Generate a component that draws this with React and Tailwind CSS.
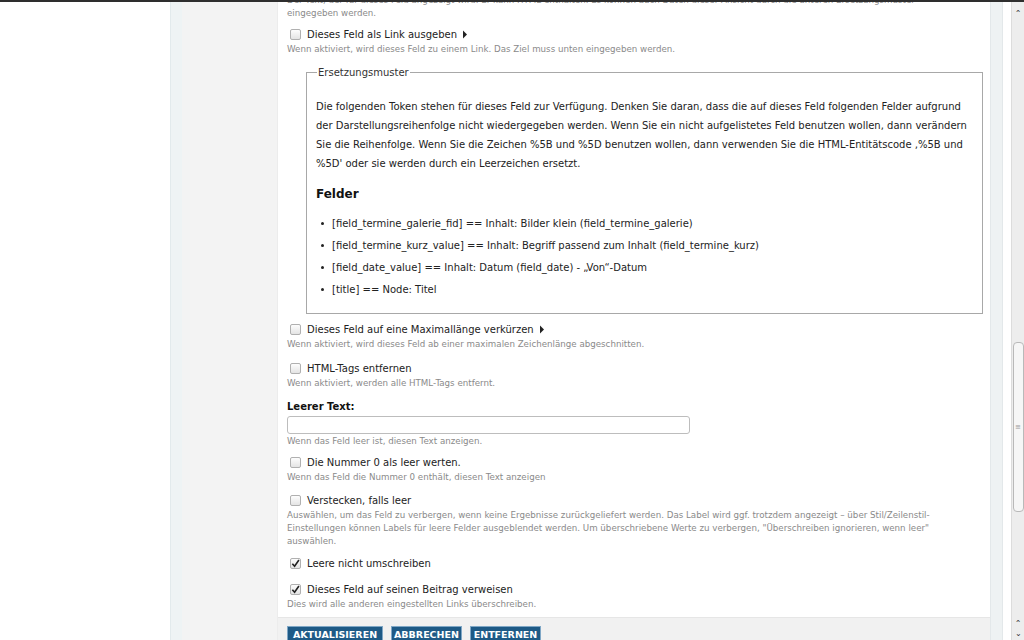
import React from "react";

const font = { fontFamily: '"DejaVu Sans", Verdana, sans-serif' };

function Box({ checked }) {
  return (
    <span className="inline-flex items-center justify-center w-[11px] h-[11px] rounded-[2px] border border-[#b0b0b0] bg-gradient-to-b from-[#fdfdfd] to-[#e4e4e4] shrink-0">
      {checked && (
        <svg width="9" height="9" viewBox="0 0 10 10">
          <path d="M1.5 5.2 L4 8 L8.8 1.2" fill="none" stroke="#222" strokeWidth="1.8" />
        </svg>
      )}
    </span>
  );
}

function Arrow() {
  return (
    <svg width="6" height="9" viewBox="0 0 6 9" className="ml-[5px]">
      <path d="M1 0.5 L5 4.5 L1 8.5 Z" fill="#222" />
    </svg>
  );
}

function Check({ label, desc, checked, arrow, mt = "mt-0" }) {
  return (
    <div className={mt}>
      <div className="flex items-center h-[14px] pl-[3px]">
        <Box checked={checked} />
        <span className="ml-[6px] text-[10px] text-[#222]">{label}</span>
        {arrow && <Arrow />}
      </div>
      {desc && (
        <div className="mt-[2px] max-w-[664px] text-[8.7px] leading-[13px] text-[#8a8a8a]">{desc}</div>
      )}
    </div>
  );
}

export default function App() {
  const tokens = [
    "[field_termine_galerie_fid] == Inhalt: Bilder klein (field_termine_galerie)",
    "[field_termine_kurz_value] == Inhalt: Begriff passend zum Inhalt (field_termine_kurz)",
    "[field_date_value] == Inhalt: Datum (field_date) - „Von“-Datum",
    "[title] == Node: Titel",
  ];

  const buttons = [
    { t: "AKTUALISIEREN", w: "w-[96px]" },
    { t: "ABBRECHEN", w: "w-[71px]" },
    { t: "ENTFERNEN", w: "w-[71px]" },
  ];

  return (
    <div className="w-[1024px] h-[640px] overflow-hidden flex flex-col bg-white" style={font}>
      <div className="h-[2px] bg-[#2e2e2e] shrink-0" />
      <div className="flex flex-1 min-h-0">
        <div className="w-[170px] bg-white" />
        <div className="w-[12px] bg-[#eef3f4] border-l border-[#e2eaec]" />
        <div className="w-[96px] bg-[#f3f3f3] border-r border-[#ececec]" />

        {/* CONTENT */}
        <div className="w-[712px] flex flex-col overflow-hidden">
          <div className="flex-1 pl-[9px] pr-[7px] overflow-hidden">
            <div className="-mt-[8px] text-[8.7px] leading-[13px] text-[#8a8a8a] whitespace-nowrap">
              Der Text, der für dieses Feld angezeigt wird. Er kann HTML enthalten. Es können auch Daten dieser Ansicht durch die unteren Ersetzungsmuster
              <br />
              eingegeben werden.
            </div>

            <Check
              mt="mt-[7px]"
              label="Dieses Feld als Link ausgeben"
              arrow
              desc="Wenn aktiviert, wird dieses Feld zu einem Link. Das Ziel muss unten eingegeben werden."
            />

            {/* FIELDSET */}
            <fieldset className="mt-[9px] ml-[19px] border border-[#a8a8a8] pl-[9px] pr-[4px] pb-[15px]">
              <legend className="text-[10px] text-[#333] px-[1px] ml-[1px]">Ersetzungsmuster</legend>
              <p className="mt-[17px] text-[10px] leading-[19px] text-[#222]">
                Die folgenden Token stehen für dieses Feld zur Verfügung. Denken Sie daran, dass die auf dieses Feld folgenden Felder aufgrund der Darstellungsreihenfolge nicht wiedergegeben werden. Wenn Sie ein nicht aufgelistetes Feld benutzen wollen, dann verändern Sie die Reihenfolge. Wenn Sie die Zeichen %5B und %5D benutzen wollen, dann verwenden Sie die HTML-Entitätscode ‚%5B und %5D' oder sie werden durch ein Leerzeichen ersetzt.
              </p>
              <h3 className="mt-[12px] text-[12px] font-bold text-[#111]">Felder</h3>
              <ul className="mt-[12px] pl-[5px] flex flex-col gap-[5px]">
                {tokens.map((t) => (
                  <li key={t} className="flex items-center text-[10px] leading-[17px] text-[#222]">
                    <span className="w-[3px] h-[3px] rounded-full bg-[#222] mr-[8px]" />
                    {t}
                  </li>
                ))}
              </ul>
            </fieldset>

            <Check
              mt="mt-[8px]"
              label="Dieses Feld auf eine Maximallänge verkürzen"
              arrow
              desc="Wenn aktiviert, wird dieses Feld ab einer maximalen Zeichenlänge abgeschnitten."
            />
            <Check
              mt="mt-[10px]"
              label="HTML-Tags entfernen"
              desc="Wenn aktiviert, werden alle HTML-Tags entfernt."
            />

            <div className="mt-[9px] text-[10px] font-bold text-[#111]">Leerer Text:</div>
            <div className="mt-[2px] w-[403px] h-[18px] rounded-[3px] border border-[#bdbdbd] bg-white" />
            <div className="mt-[1px] text-[8.7px] leading-[13px] text-[#8a8a8a]">Wenn das Feld leer ist, diesen Text anzeigen.</div>

            <Check
              mt="mt-[7px]"
              label="Die Nummer 0 als leer werten."
              desc="Wenn das Feld die Nummer 0 enthält, diesen Text anzeigen"
            />
            <Check
              mt="mt-[9px]"
              label="Verstecken, falls leer"
              desc={'Auswählen, um das Feld zu verbergen, wenn keine Ergebnisse zurückgeliefert werden. Das Label wird ggf. trotzdem angezeigt – über Stil/Zeilenstil-Einstellungen können Labels für leere Felder ausgeblendet werden. Um überschriebene Werte zu verbergen, "Überschreiben ignorieren, wenn leer" auswählen.'}
            />
            <Check mt="mt-[8px]" label="Leere nicht umschreiben" checked />
            <Check
              mt="mt-[12px]"
              label="Dieses Feld auf seinen Beitrag verweisen"
              checked
              desc="Dies wird alle anderen eingestellten Links überschreiben."
            />
          </div>

          {/* BUTTONS */}
          <div className="h-[23px] shrink-0 bg-[#f1f1f1] border-t border-[#e6e6e6] flex items-start gap-[8px] pl-[9px] pt-[8px]">
            {buttons.map((b) => (
              <span
                key={b.t}
                className={`${b.w} text-center h-[18px] bg-[#1e5a86] border border-[#7fa7c6] text-white text-[9.5px] font-bold leading-[16px]`}
              >
                {b.t}
              </span>
            ))}
          </div>
        </div>

        <div className="w-[13px] bg-[#eef2f3] border-x border-[#e3e8ea]" />
        <div className="w-[8px] bg-white" />

        {/* SCROLLBAR */}
        <div className="w-[13px] bg-[#ededed] border-l border-[#dcdcdc] flex flex-col items-center">
          <span className="text-[8px] leading-[8px] text-[#333] mt-[8px]">⌃</span>
          <div className="flex-1 w-full flex flex-col items-center">
            <div className="mt-[324px] w-[11px] h-[170px] rounded-[4px] border border-[#b9b9b9] bg-[#f6f6f6] flex items-center justify-center">
              <span className="text-[7px] text-[#999] leading-[7px]">≡</span>
            </div>
          </div>
          <span className="text-[8px] leading-[8px] text-[#333]">⌃</span>
          <span className="text-[8px] leading-[8px] text-[#333] mb-[4px] rotate-180">⌃</span>
        </div>
      </div>
    </div>
  );
}
